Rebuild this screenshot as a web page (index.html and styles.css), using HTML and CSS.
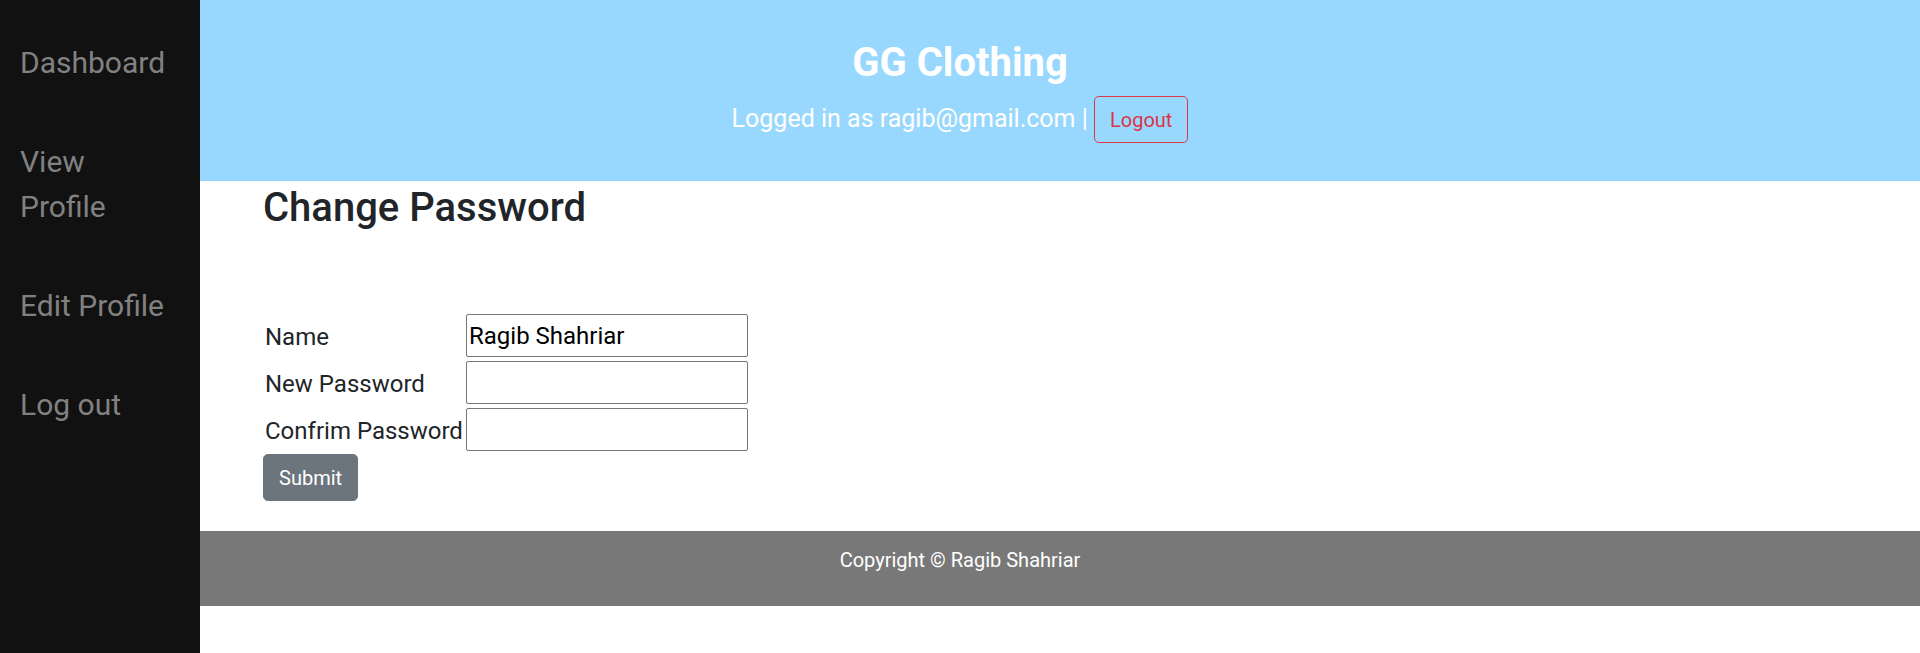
FILE: index.html
```html
<!DOCTYPE html>
<html lang="en">
<head>
<meta charset="utf-8">
<title>Change Password - GG Clothing</title>
<link rel="stylesheet" href="styles.css">
</head>
<body>
<nav class="sidebar">
  <a class="side-link" href="#">Dashboard</a>
  <a class="side-link" href="#">View<br>Profile</a>
  <a class="side-link" href="#">Edit Profile</a>
  <a class="side-link" href="#">Log out</a>
</nav>

<header class="topbar">
  <h1 class="brand">GG Clothing</h1>
  <p class="status">Logged in as ragib@gmail.com | <button class="btn btn-logout" type="button">Logout</button></p>
</header>

<main class="content">
  <h1 class="page-title">Change Password</h1>
  <form class="pw-form">
    <div class="form-grid">
      <label class="form-label" for="name">Name</label>
      <input class="form-input" id="name" type="text" value="Ragib Shahriar">
      <label class="form-label" for="newpw">New Password</label>
      <input class="form-input" id="newpw" type="password">
      <label class="form-label" for="confpw">Confrim Password</label>
      <input class="form-input" id="confpw" type="password">
    </div>
    <button class="btn btn-submit" type="button">Submit</button>
  </form>
</main>

<footer class="footer">
  <p class="footer-text">Copyright © Ragib Shahriar</p>
</footer>
</body>
</html>
```

FILE: styles.css
```css
html, body {
  margin: 0;
  padding: 0;
}

body {
  font-family: Roboto, "Noto Sans", sans-serif;
  color: #212529;
  background: #ffffff;
}

/* Sidebar (fixed, overlays the header and footer) */
.sidebar {
  position: fixed;
  top: 0;
  left: 0;
  width: 200px;
  height: 100%;
  background: #111111;
  padding-top: 13px;
  box-sizing: border-box;
  z-index: 10;
}

.side-link {
  display: block;
  padding: 27px 0 27px 20px;
  font-size: 30px;
  line-height: 45px;
  color: #818181;
  text-decoration: none;
}

/* Header */
.topbar {
  background: #99d8fe;
  height: 181px;
  box-sizing: border-box;
  padding-top: 39px;
  text-align: center;
  color: #ffffff;
}

.brand {
  margin: 0 0 9px;
  font-size: 40px;
  line-height: 48px;
  font-weight: 700;
}

.status {
  margin: 0;
  font-size: 25px;
  line-height: 37.5px;
}

.btn {
  font-family: inherit;
  font-size: 20px;
  line-height: 30px;
  padding: 7.5px 15px;
  border: 1px solid transparent;
  border-radius: 4.8px;
  cursor: pointer;
}

.btn-logout {
  background: transparent;
  color: #dc3545;
  border-color: #dc3545;
  vertical-align: baseline;
}

/* Main content */
.content {
  padding-left: 263px;
}

.page-title {
  margin: 3px 0 0;
  font-size: 40px;
  line-height: 48px;
  font-weight: 500;
  color: #212529;
}

.pw-form {
  margin-top: 82px;
}

.form-grid {
  display: grid;
  grid-template-columns: 199px 282px;
  column-gap: 4px;
  row-gap: 4px;
  justify-content: start;
  align-items: start;
}

.form-label {
  font-size: 24px;
  line-height: 39px;
  padding: 4px 0 0 2px;
  white-space: nowrap;
  color: #212529;
}

.form-input {
  box-sizing: border-box;
  width: 282px;
  height: 43px;
  padding: 1px 2px;
  font-family: inherit;
  font-size: 24px;
  color: #000000;
  border: 1px solid #767676;
  border-radius: 2px;
  background: #ffffff;
}

.btn-submit {
  display: block;
  margin-top: 3px;
  background: #6c757d;
  border-color: #6c757d;
  color: #ffffff;
}

/* Footer */
.footer {
  margin-top: 30px;
  background: #787878;
  height: 75px;
  box-sizing: border-box;
  padding-top: 14px;
  text-align: center;
}

.footer-text {
  margin: 0;
  font-size: 20px;
  line-height: 30px;
  color: #ffffff;
}
```
